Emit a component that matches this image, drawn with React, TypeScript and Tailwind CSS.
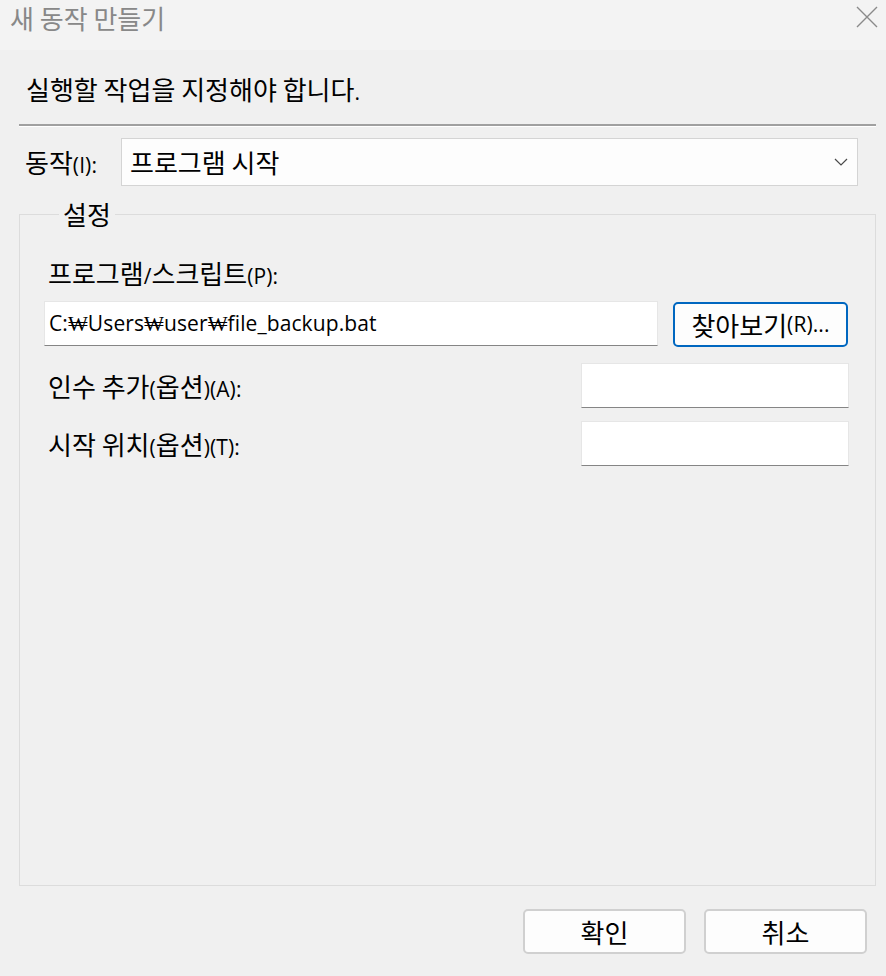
import React from "react";

// Latin runs are set smaller than the Hangul, like Malgun Gothic does
function L({ children }: { children: React.ReactNode }) {
  return <span className="font-['Open_Sans'] text-[21px] leading-none tracking-[0.1px]">{children}</span>;
}

function CloseIcon() {
  return (
    <svg width="22" height="22" viewBox="0 0 22 22" fill="none">
      <path d="M1 1 L21 21 M21 1 L1 21" stroke="#8a8a8a" strokeWidth="1.4" />
    </svg>
  );
}

function Chevron() {
  return (
    <svg width="14" height="8" viewBox="0 0 14 8" fill="none">
      <path d="M1 1 L7 7 L13 1" stroke="#4a4a4a" strokeWidth="1.2" />
    </svg>
  );
}

function TextBox({ children, className }: { children?: React.ReactNode; className: string }) {
  return (
    <div
      className={`flex items-center border border-[#e6e6e6] border-b-[#858585] bg-white pl-[4px] text-black ${className}`}
    >
      {children}
    </div>
  );
}

function DlgButton({ label }: { label: string }) {
  return (
    <button className="flex h-[45px] w-[163px] items-center justify-center rounded-[5px] border-2 border-[#d0d0d0] bg-[#fdfdfd] text-[26px] leading-none text-black">
      {label}
    </button>
  );
}

export default function App() {
  return (
    <div className="flex h-[976px] w-[886px] flex-col bg-[#f0f0f0] font-['Noto_Sans_CJK_KR'] text-[26px] text-black">
      {/* title bar */}
      <div className="flex h-[50px] items-start justify-between bg-[#f3f3f3] pl-[10px] pr-[8px]">
        <span className="mt-[4px] leading-[28px] text-[#888888]">새 동작 만들기</span>
        <div className="mt-[6px]">
          <CloseIcon />
        </div>
      </div>

      <div className="flex flex-col pl-[19px] pr-[10px]">
        <p className="mt-[25px] pl-[7px] leading-[28px]">
          실행할 작업을 지정해야 합니다<L>.</L>
        </p>

        <div className="mt-[21px] h-[3px] border-t-2 border-b border-t-[#a0a0a0] border-b-white" />

        <div className="mt-[11px] flex items-center pr-[18px]">
          <label className="w-[102px] pl-[6px] leading-[28px]">
            동작<L>(I):</L>
          </label>
          <div className="flex h-[48px] flex-1 items-center justify-between border border-[#d4d4d4] bg-[#fdfdfd] pl-[8px] pr-[9px]">
            <span className="leading-[28px]">프로그램 시작</span>
            <Chevron />
          </div>
        </div>

        <fieldset className="mt-[14px] h-[686px] border border-[#dcdcdc] pl-[24px] pr-[26px]">
          <legend className="ml-[15px] px-[4px] leading-[28px]">설정</legend>

          <label className="mt-[31px] block pl-[4px] leading-[28px]">
            프로그램<L>/</L>스크립트<L>(P):</L>
          </label>
          <div className="mt-[14px] flex items-start justify-between pr-[1px]">
            <TextBox className="h-[45px] w-[614px]">
              <L>C:₩Users₩user₩file_backup.bat</L>
            </TextBox>
            <button className="mt-[1px] flex h-[45px] w-[175px] items-center justify-center rounded-[5px] border-2 border-[#0067c0] bg-[#fdfdfd] leading-none text-black">
              찾아보기<L>(R)...</L>
            </button>
          </div>

          <div className="mt-[16px] flex items-center justify-between">
            <label className="pl-[4px] leading-[28px]">
              인수 추가<L>(</L>옵션<L>)(A):</L>
            </label>
            <TextBox className="h-[45px] w-[268px]" />
          </div>
          <div className="mt-[13px] flex items-center justify-between">
            <label className="pl-[4px] leading-[28px]">
              시작 위치<L>(</L>옵션<L>)(T):</L>
            </label>
            <TextBox className="h-[45px] w-[268px]" />
          </div>
        </fieldset>

        <div className="mt-[23px] flex justify-end gap-[18px] pr-[9px]">
          <DlgButton label="확인" />
          <DlgButton label="취소" />
        </div>
      </div>
    </div>
  );
}
